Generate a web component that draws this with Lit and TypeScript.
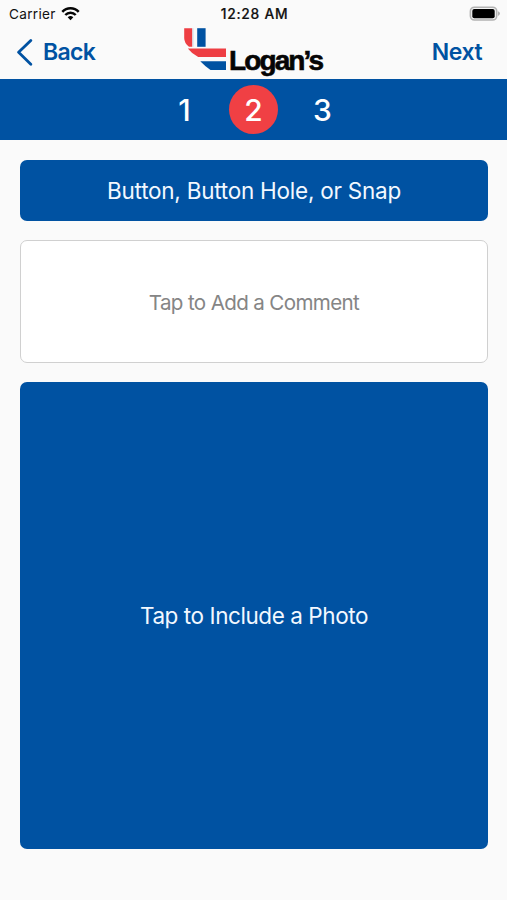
import { LitElement, html, css } from "lit";
import { customElement, property } from "lit/decorators.js";

@customElement("status-bar")
class StatusBar extends LitElement {
  static styles = css`
    :host { display: grid; grid-template-columns: 1fr auto 1fr; align-items: center; height: 27px; padding: 0 7px 0 9px; color: #111; font-size: 13.6px; }
    .left { display: flex; align-items: center; gap: 5px; }
    .carrier { letter-spacing: 0.3px; }
    .time { font-weight: 500; font-size: 13.8px; letter-spacing: 0.75px; -webkit-text-stroke: 0.2px #111; }
    .battery { justify-self: end; }
    svg { display: block; }
  `;
  render() {
    return html`
      <div class="left">
        <span class="carrier">Carrier</span>
        <svg width="19" height="15" viewBox="0 0 19 15" fill="none" stroke="#050505" stroke-width="2.5">
          <path d="M1.3 5.8C5.8 1 13.2 1 17.7 5.8" />
          <path d="M4.3 9C7.2 6 11.8 6 14.7 9" />
          <path d="M9.5 14.2L6.7 11.3Q9.5 8.9 12.3 11.3Z" fill="#050505" stroke="none" />
        </svg>
      </div>
      <span class="time">12:28 AM</span>
      <svg class="battery" width="31" height="16" viewBox="0 0 31 16">
        <rect x="1.4" y="1.2" width="26.3" height="12.8" rx="4" fill="#f4f4f4" stroke="#b3b3b3" stroke-width="1.6" />
        <rect x="3.3" y="3" width="22.4" height="9.2" rx="2" fill="#000" />
        <path d="M29 5.2Q31 6.1 31 7.5T29 9.9Z" fill="#b3b3b3" />
      </svg>
    `;
  }
}

@customElement("nav-header")
class NavHeader extends LitElement {
  static styles = css`
    :host { display: grid; grid-template-columns: 1fr 142px 1fr; height: 52px; padding: 0 25px 0 16px; color: #0052a2; font-size: 23px; font-weight: 600; }
    .back { display: flex; align-items: center; gap: 9px; height: 50px; }
    .next { justify-self: end; line-height: 50px; letter-spacing: -0.5px; }
    .label { letter-spacing: -0.7px; }
    svg { display: block; }
    .wordmark { font: bold 28px "Liberation Sans", Arial, sans-serif; }
  `;
  render() {
    return html`
      <div class="back">
        <svg width="18" height="28" viewBox="0 0 18 28" fill="none" stroke="#0052a2" stroke-width="2.8" stroke-linecap="round" stroke-linejoin="round">
          <path d="M14.8 2.4L2.6 14.3L14.8 26.2" />
        </svg>
        <span class="label">Back</span>
      </div>
      <svg class="brand" width="142" height="52" viewBox="178 27 142 52" overflow="visible">
        <path d="M184.2 28.2H192.3V46.8H189Q184.2 43 184.2 38Z" fill="#ee3e43" />
        <path d="M193.1 28.2V46.8" stroke="#cfe5f4" stroke-width="1" />
        <path d="M197.2 28.2H205.6V46.8H197.2Z" fill="#0052a2" />
        <path d="M187.8 48.6H226V57H198.2Q191.5 53.5 187.8 48.6Z" fill="#ee3e43" />
        <path d="M200.3 61.3H226V70H210.5Q205 66.3 200.3 61.3Z" fill="#0052a2" />
        <text class="wordmark" x="229" y="70" textLength="95" lengthAdjust="spacing" fill="#050505" stroke="#050505" stroke-width="0.6">Logan’s</text>
      </svg>
      <span class="next">Next</span>
    `;
  }
}

@customElement("step-bar")
class StepBar extends LitElement {
  @property({ type: Number }) current = 2;
  static styles = css`
    :host { display: flex; justify-content: center; align-items: center; gap: 20px; height: 61px; background: #0052a2; color: #fff; font-size: 30px; font-weight: 550; }
    .step { width: 49px; height: 49px; line-height: 50px; border-radius: 50%; text-align: center; }
    .active { background: #f04044; }
  `;
  render() {
    return [1, 2, 3].map(
      (n) => html`<div class="step ${n === this.current ? "active" : ""}">${n}</div>`
    );
  }
}

@customElement("app-root")
class AppRoot extends LitElement {
  static styles = css`
    :host { display: flex; flex-direction: column; box-sizing: border-box; height: 900px; background: #fafafa; font-family: Inter, "Liberation Sans", sans-serif; }
    .form { display: flex; flex-direction: column; gap: 19px; padding: 20px 19px 0 20px; }
    .tile { display: flex; align-items: center; justify-content: center; box-sizing: border-box; border-radius: 7px; background: #0052a2; color: #f2f8ff; font-size: 22.5px; }
    .item { height: 61px; letter-spacing: -0.24px; }
    .comment { height: 123px; padding-top: 1px; border: 1px solid #d0d0d0; background: #fff; color: #858585; font-size: 20.6px; letter-spacing: -0.65px; }
    .photo { height: 467px; letter-spacing: -0.43px; }
  `;
  render() {
    return html`
      <status-bar></status-bar>
      <nav-header></nav-header>
      <step-bar .current=${2}></step-bar>
      <div class="form">
        <div class="tile item">Button, Button Hole, or Snap</div>
        <div class="tile comment">Tap to Add a Comment</div>
        <div class="tile photo">Tap to Include a Photo</div>
      </div>
    `;
  }
}
